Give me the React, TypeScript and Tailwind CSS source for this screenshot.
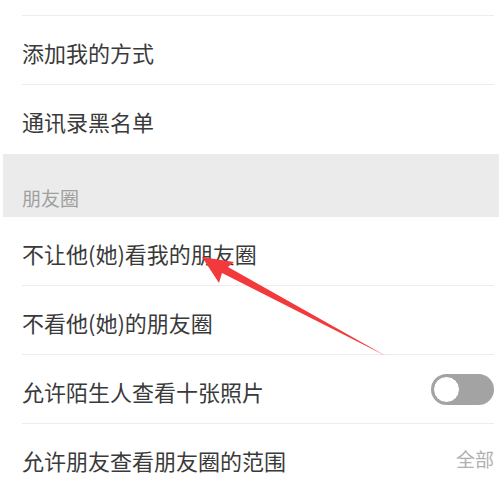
import React from "react";

const font = { fontFamily: '"Noto Sans CJK SC", "Noto Sans", sans-serif' };

function Row({ children, right, last }: { children: React.ReactNode; right?: React.ReactNode; last?: boolean }) {
  return (
    <div className={`ml-[22px] mr-[5px] h-[69px] flex items-center justify-between ${last ? "" : "border-b border-[#ececec]"}`}>
      <span className="text-[22px] text-[#3a3a3a] leading-none pt-[3px]">{children}</span>
      {right}
    </div>
  );
}

export default function App() {
  return (
    <div className="relative w-[499px] h-[481px] overflow-hidden bg-white" style={font}>
      <div className="-mt-[53px]">
        <Row>允许朋友查看朋友圈的范围</Row>
        <Row>添加我的方式</Row>
        <Row last>通讯录黑名单</Row>
      </div>
      <div className="h-[63px] ml-[3px] bg-[#ebebeb] flex items-end pl-[19px] pb-[10px]">
        <span className="text-[19px] text-[#a0a0a0] leading-none">朋友圈</span>
      </div>
      <Row>不让他(她)看我的朋友圈</Row>
      <Row>不看他(她)的朋友圈</Row>
      <Row
        right={
          <div className="w-[63px] h-[31px] rounded-full bg-[#a3a3a3] flex items-center p-[2px]">
            <div className="w-[27px] h-[27px] rounded-full bg-white border border-[#9a9a9a]" />
          </div>
        }
      >
        允许陌生人查看十张照片
      </Row>
      <Row last right={<span className="text-[19px] text-[#b0b0b0] leading-none">全部</span>}>
        允许朋友查看朋友圈的范围
      </Row>
      <svg className="absolute left-0 top-0 pointer-events-none" width="499" height="481" viewBox="0 0 499 481">
        <polygon points="202,257 234,262 228,267 386,356 222,273 219,283" fill="#f2393b" />
      </svg>
    </div>
  );
}
